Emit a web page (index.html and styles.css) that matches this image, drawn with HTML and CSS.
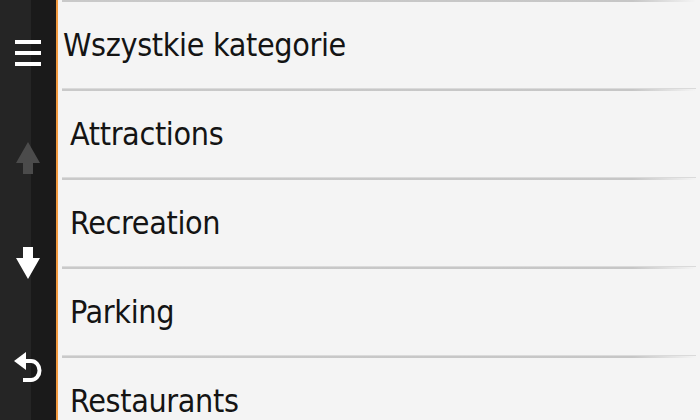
FILE: index.html
```html
<!DOCTYPE html>
<html>
<head>
<meta charset="utf-8">
<title>Wszystkie kategorie</title>
<link rel="stylesheet" href="styles.css">
</head>
<body>
<div class="screen">
  <div class="sidebar">
    <div class="slot">
      <svg width="26" height="28" viewBox="0 0 26 28">
        <rect x="0" y="1" width="26" height="4" fill="#fff"/>
        <rect x="0" y="12" width="26" height="4" fill="#fff"/>
        <rect x="0" y="23" width="26" height="4" fill="#fff"/>
      </svg>
    </div>
    <div class="slot">
      <svg width="24" height="32" viewBox="0 0 24 32">
        <path d="M12 0 L24 21 L17 21 L17 32 L7 32 L7 21 L0 21 Z" fill="#4b4b4b"/>
      </svg>
    </div>
    <div class="slot">
      <svg width="24" height="32" viewBox="0 0 24 32">
        <path d="M7 0 L17 0 L17 11 L24 11 L12 32 L0 11 L7 11 Z" fill="#fff"/>
      </svg>
    </div>
    <div class="slot">
      <svg width="28" height="32" viewBox="0 0 28 32">
        <path d="M0 9 L12 0 L12 18 Z" fill="#fff"/>
        <path d="M10 9 L17 9 A8.5 9.5 0 0 1 17 28 L9 28" fill="none" stroke="#fff" stroke-width="4"/>
      </svg>
    </div>
  </div>
  <div class="list">
    <div class="divider"></div>
    <div class="row header">Wszystkie kategorie</div>
    <div class="divider"></div>
    <div class="row">Attractions</div>
    <div class="divider"></div>
    <div class="row">Recreation</div>
    <div class="divider"></div>
    <div class="row">Parking</div>
    <div class="divider"></div>
    <div class="row">Restaurants</div>
  </div>
</div>
</body>
</html>
```

FILE: styles.css
```css
html, body {
   margin: 0;
   padding: 0;
   background-color: #f4f4f4;
}

.screen {
   display: flex;
   width: 700px;
   height: 420px;
   overflow: hidden;
}

.sidebar {
   flex: 0 0 56px;
   display: flex;
   flex-direction: column;
   background: linear-gradient(to right, #252525 31px, #1a1a1a 31px);
   border-right: 2px solid #f29a3f;
}

.slot {
   height: 105px;
   display: flex;
   align-items: center;
   justify-content: center;
}

.list {
   flex: 1;
   display: flex;
   flex-direction: column;
   background-color: #f4f4f4;
   margin-top: -1px;
}

.divider {
   flex: 0 0 3px;
   margin-left: 4px;
   margin-right: 4px;
   background: linear-gradient(to right, #c9c9c9 0, #c6c6c6 90%, rgba(200, 200, 200, 0) 100%);
   border-top: 1px solid #dadada;
   box-sizing: border-box;
}

.row {
   flex: 0 0 86px;
   display: flex;
   align-items: center;
   padding-left: 12px;
   font-family: "DejaVu Sans Condensed", "DejaVu Sans", sans-serif;
   font-stretch: condensed;
   font-size: 32px;
   letter-spacing: -0.35px;
   color: #141414;
   white-space: nowrap;
}

.row.header {
   padding-left: 5px;
}
```
